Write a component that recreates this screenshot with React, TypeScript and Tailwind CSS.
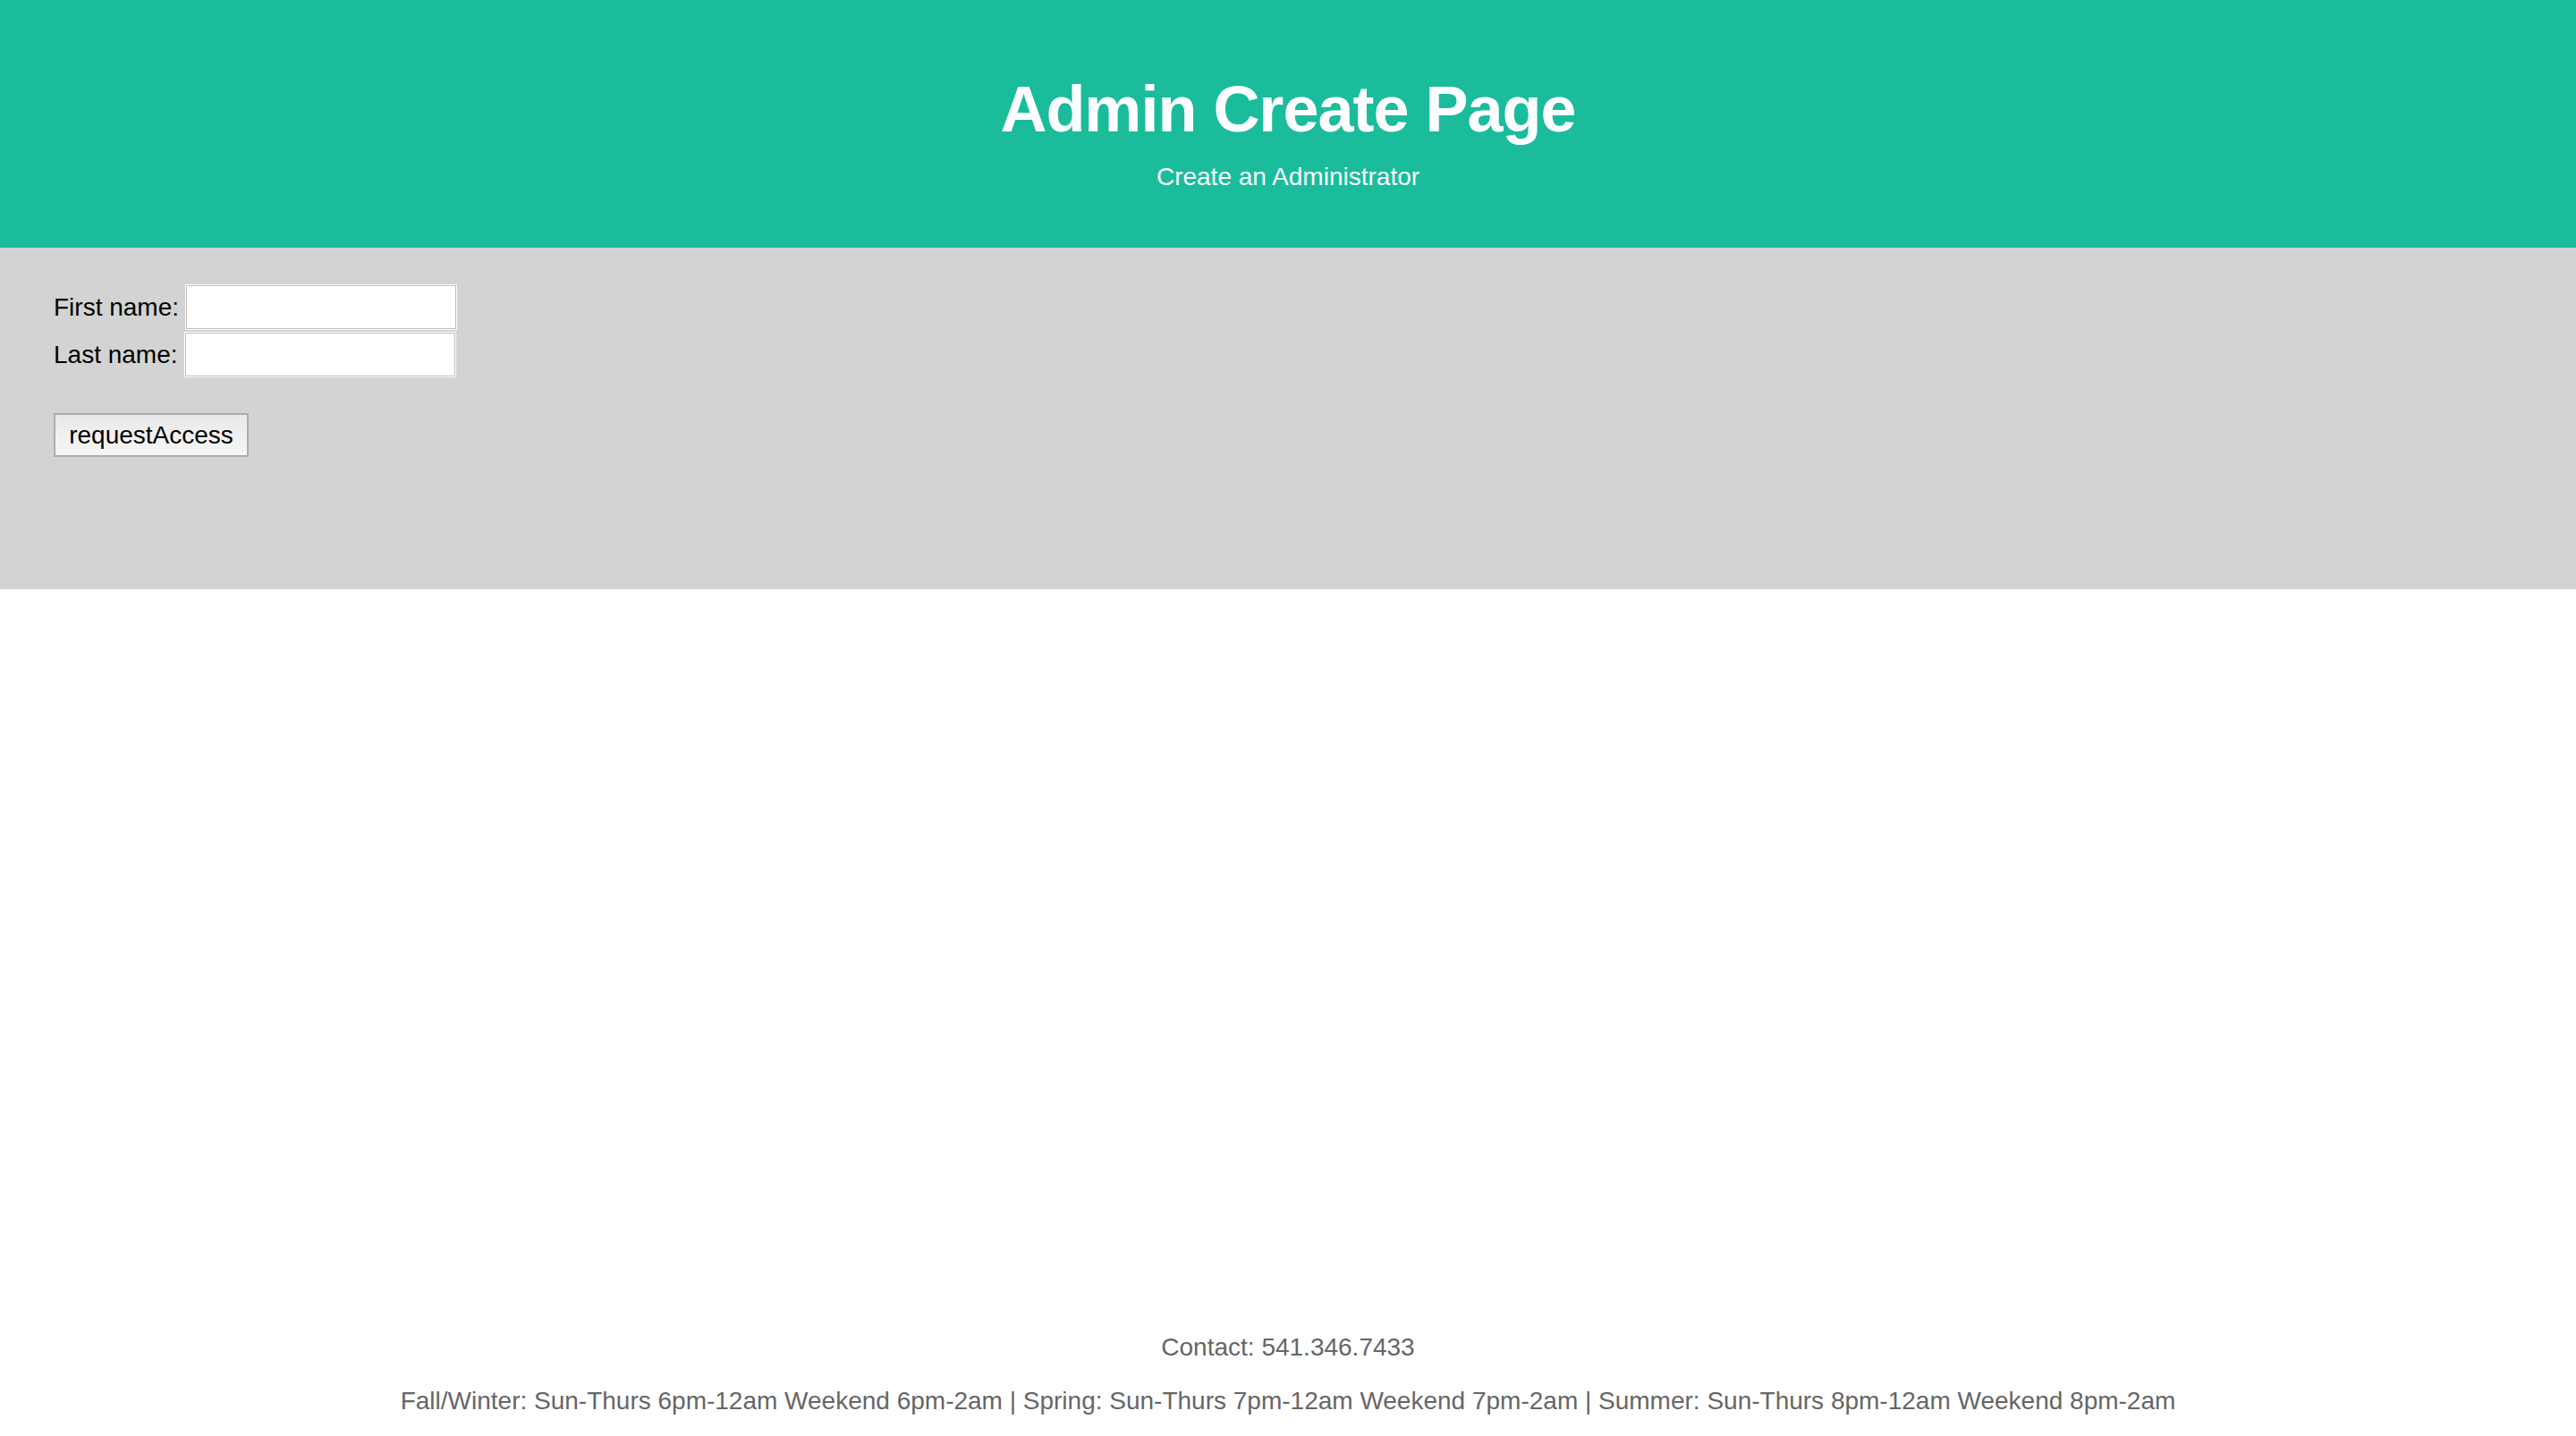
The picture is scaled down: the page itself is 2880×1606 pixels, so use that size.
export default function App() {
  const font = { fontFamily: '"Liberation Sans", Arial, sans-serif' };

  return (
    <div className="min-h-screen flex flex-col bg-white" style={font}>
      {/* Header */}
      <header className="bg-[#1abc9c] text-white text-center pt-[81px] pb-[63px]">
        <h1 className="text-[72px] leading-[83px] font-bold tracking-[-1px] mb-[18px]">Admin Create Page</h1>
        <p className="text-[28px] leading-[32px]">Create an Administrator</p>
      </header>

      {/* Form */}
      <section className="bg-[#d3d3d3] h-[382px] px-[60px] pt-[40px] text-black text-[28px]">
        <div className="flex items-center gap-2 h-[53px]">
          <label>First name:</label>
          <input
            type="text"
            className="w-[302px] h-[49px] bg-white border border-[#bfbfbf] shadow-[0_0_0_1px_#ffffff] outline-none"
          />
        </div>
        <div className="flex items-center gap-2 h-[53px]">
          <label>Last name:</label>
          <input
            type="text"
            className="w-[302px] h-[49px] bg-white border border-[#bfbfbf] shadow-[0_0_0_1px_#ffffff] outline-none"
          />
        </div>
        <button className="mt-[39px] w-[218px] h-[49px] border-2 border-[#acacac] bg-gradient-to-b from-[#e9e9e9] to-[#f6f6f6] text-[28px] leading-none text-black">
          requestAccess
        </button>
      </section>

      {/* Footer */}
      <footer className="mt-auto text-center text-[#666666] text-[28px] leading-[32px] pb-[23px]">
        <p className="mb-[28px]">Contact: 541.346.7433</p>
        <p>
          Fall/Winter: Sun-Thurs 6pm-12am Weekend 6pm-2am | Spring: Sun-Thurs 7pm-12am Weekend 7pm-2am | Summer:
          Sun-Thurs 8pm-12am Weekend 8pm-2am
        </p>
      </footer>
    </div>
  );
}
